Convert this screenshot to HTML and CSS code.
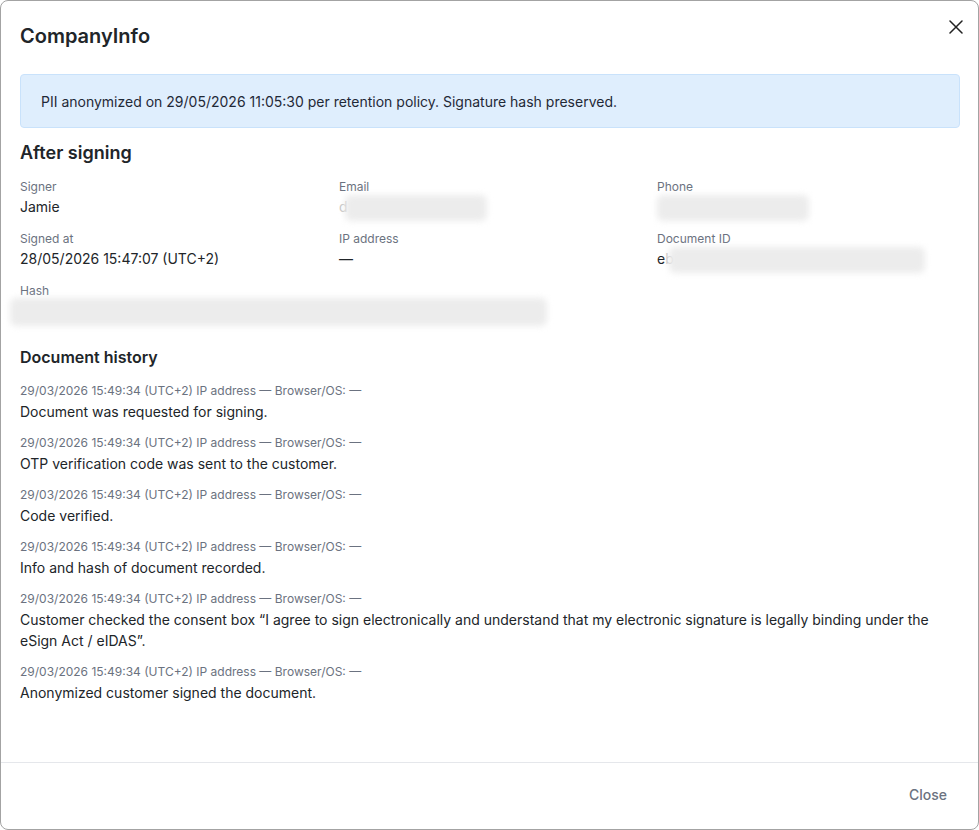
FILE: index.html
```html
<!DOCTYPE html>
<html lang="en">
<head>
    <meta charset="UTF-8">
    <meta name="viewport" content="width=device-width, initial-scale=1.0">
    <title>CompanyInfo</title>
    <link rel="stylesheet" href="styles.css">
</head>
<body>
    <div class="modal">
        <div class="modal-header">
            <h1>CompanyInfo</h1>
            <button class="btn-x" aria-label="Close">
                <svg width="14" height="14" viewBox="0 0 14 14"><path d="M1 1L13 13M13 1L1 13" stroke="#222" stroke-width="1.5" stroke-linecap="round"/></svg>
            </button>
        </div>

        <div class="modal-body">
            <div class="alert">PII anonymized on 29/05/2026 11:05:30 per retention policy. Signature hash preserved.</div>

            <h2>After signing</h2>
            <div class="fields">
                <div class="field">
                    <div class="label">Signer</div>
                    <div class="value">Jamie</div>
                </div>
                <div class="field">
                    <div class="label">Email</div>
                    <div class="value faded">d<span class="redacted email"></span></div>
                </div>
                <div class="field">
                    <div class="label">Phone</div>
                    <div class="value faded"><span class="redacted phone"></span></div>
                </div>
                <div class="field">
                    <div class="label">Signed at</div>
                    <div class="value">28/05/2026 15:47:07 (UTC+2)</div>
                </div>
                <div class="field">
                    <div class="label">IP address</div>
                    <div class="value">—</div>
                </div>
                <div class="field">
                    <div class="label">Document ID</div>
                    <div class="value">e<span class="faded">b</span><span class="redacted docid"></span></div>
                </div>
                <div class="field wide">
                    <div class="label">Hash</div>
                    <div class="value"><span class="redacted hash"></span></div>
                </div>
            </div>

            <h3>Document history</h3>
            <div class="history">
                <div class="entry">
                    <div class="meta">29/03/2026 15:49:34 (UTC+2) IP address — Browser/OS: —</div>
                    <div class="text">Document was requested for signing.</div>
                </div>
                <div class="entry">
                    <div class="meta">29/03/2026 15:49:34 (UTC+2) IP address — Browser/OS: —</div>
                    <div class="text">OTP verification code was sent to the customer.</div>
                </div>
                <div class="entry">
                    <div class="meta">29/03/2026 15:49:34 (UTC+2) IP address — Browser/OS: —</div>
                    <div class="text">Code verified.</div>
                </div>
                <div class="entry">
                    <div class="meta">29/03/2026 15:49:34 (UTC+2) IP address — Browser/OS: —</div>
                    <div class="text">Info and hash of document recorded.</div>
                </div>
                <div class="entry">
                    <div class="meta">29/03/2026 15:49:34 (UTC+2) IP address — Browser/OS: —</div>
                    <div class="text">Customer checked the consent box “I agree to sign electronically and understand that my electronic signature is legally binding under the eSign Act / eIDAS”.</div>
                </div>
                <div class="entry">
                    <div class="meta">29/03/2026 15:49:34 (UTC+2) IP address — Browser/OS: —</div>
                    <div class="text">Anonymized customer signed the document.</div>
                </div>
            </div>
        </div>

        <div class="modal-footer">
            <button class="btn-close">Close</button>
        </div>
    </div>
</body>
</html>
```

FILE: styles.css
```css
*{
    padding: 0;
    margin: 0;
    box-sizing: border-box;
}

body{
    height: 100vh;
    background: #fff;
    overflow: hidden;
    font-family: Inter, "Noto Sans", sans-serif;
    color: #212529;
}

.modal {
    height: 830px;
    width: 979px;
    border: 1px solid #a3a3a3;
    border-radius: 8px;
    background: #fff;
    display: flex;
    flex-direction: column;
    overflow: hidden;
}

.modal-header {
    display: flex;
    justify-content: space-between;
    align-items: flex-start;
    padding: 21px 12px 0 19px;
}

.modal-header h1 {
    font-size: 20px;
    line-height: 28px;
    font-weight: 600;
}

.btn-x {
    border: none;
    background: none;
    width: 20px;
    height: 20px;
    display: flex;
    align-items: center;
    justify-content: center;
    margin-top: -5px;
    cursor: pointer;
}

.modal-body {
    flex: 1;
    padding: 24px 18px 0 19px;
}

.alert {
    background: #dfeefd;
    border: 1px solid #c9e2fb;
    border-radius: 4px;
    padding: 17px 20px 15px;
    font-size: 14px;
    line-height: 20px;
    color: #1f2937;
    margin-bottom: 12px;
}

h2 {
    font-size: 18px;
    line-height: 26px;
    font-weight: 600;
    margin-bottom: 13px;
}

.fields {
    display: grid;
    grid-template-columns: 319px 318px 1fr;
    row-gap: 14px;
}

.field.wide {
    grid-column: 1 / -1;
}

.label {
    font-size: 12px;
    line-height: 16px;
    color: #6b7280;
    margin-bottom: 2px;
}

.value {
    font-size: 14px;
    line-height: 20px;
    height: 20px;
    white-space: nowrap;
}

.faded {
    color: #c4c4c4;
}

.redacted {
    display: inline-block;
    vertical-align: top;
    height: 26px;
    margin-top: -2px;
    background: #ececec;
    border-radius: 6px;
    filter: blur(3px);
}

.redacted.email {
    width: 142px;
    margin-left: -3px;
}

.redacted.phone {
    width: 152px;
}

.redacted.docid {
    width: 256px;
    margin-left: -5px;
}

.redacted.hash {
    width: 537px;
    margin-left: -10px;
    margin-top: -3px;
    height: 28px;
}

h3 {
    font-size: 16px;
    line-height: 22px;
    font-weight: 600;
    margin-top: 25px;
    margin-bottom: 15px;
}

.history {
    display: flex;
    flex-direction: column;
    gap: 13px;
}

.meta {
    font-size: 12px;
    line-height: 16px;
    color: #6b7280;
    margin-bottom: 2px;
}

.text {
    font-size: 14px;
    line-height: 21px;
}

.modal-footer {
    border-top: 1px solid #e5e7eb;
    padding: 14px 20px 16px;
    display: flex;
    justify-content: flex-end;
}

.btn-close {
    border: none;
    background: none;
    font-family: inherit;
    font-size: 14px;
    line-height: 20px;
    font-weight: 500;
    color: #6b7280;
    padding: 8px 11px;
    cursor: pointer;
}
```
